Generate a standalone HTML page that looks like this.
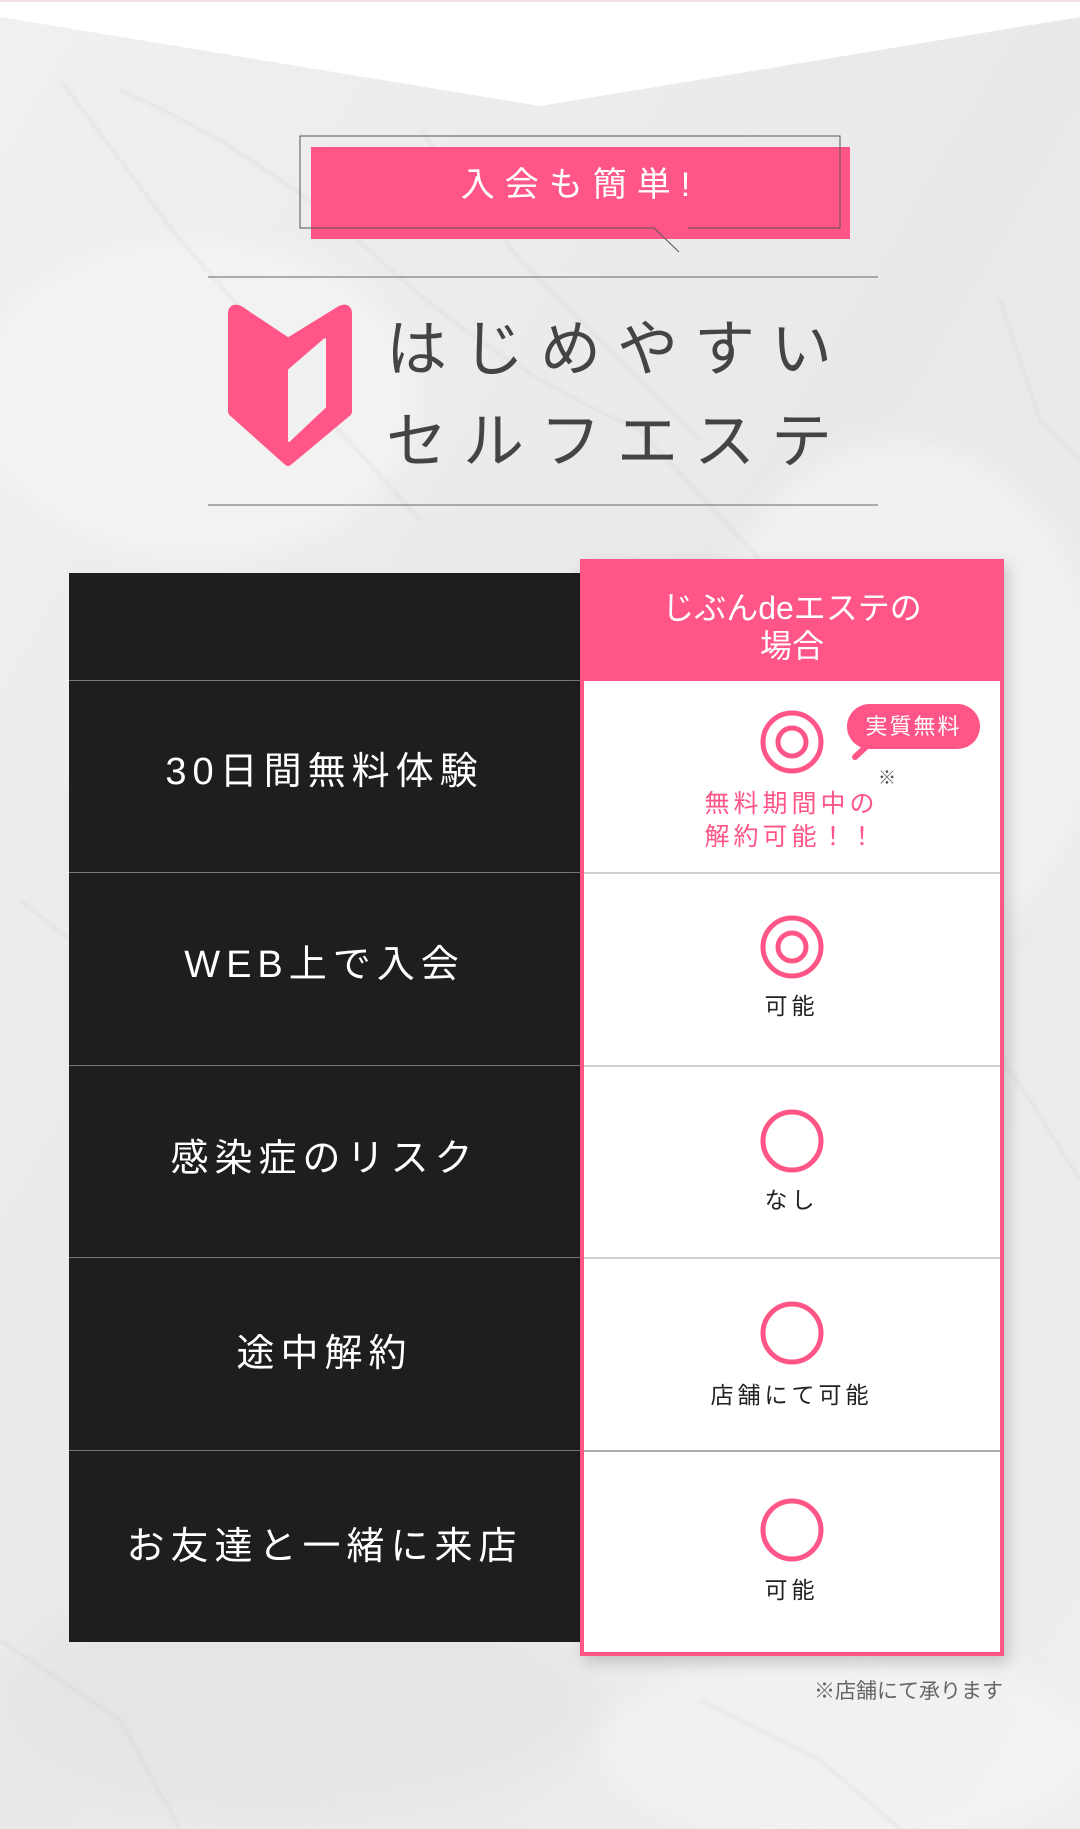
<!DOCTYPE html>
<html><head><meta charset="utf-8">
<style>
*{margin:0;padding:0;box-sizing:border-box}
html,body{width:1080px;height:1829px;overflow:hidden}
body{position:relative;font-family:"Liberation Sans","Noto Sans CJK JP",sans-serif;background:#ededed}
.abs{position:absolute}
.lt{color:#fff;font-size:38px;letter-spacing:6px;text-align:center;width:511px;left:69px;line-height:1}
.rt{color:#222;font-size:23px;letter-spacing:4px;text-align:center;width:423px;left:580px;line-height:1}
</style></head><body>
<svg class="abs" style="left:0;top:0" width="1080" height="1829">
<defs>
<linearGradient id="bg" x1="0" y1="0" x2="1" y2="1">
<stop offset="0" stop-color="#f0f0f0"/><stop offset=".5" stop-color="#e9e9e9"/><stop offset="1" stop-color="#eeeeee"/>
</linearGradient>
<filter id="bl"><feGaussianBlur stdDeviation="1.5"/></filter>
<filter id="bl2"><feGaussianBlur stdDeviation="12"/></filter>
</defs>
<rect width="1080" height="1829" fill="url(#bg)"/>
<g filter="url(#bl2)" opacity=".5">
<ellipse cx="200" cy="400" rx="220" ry="160" fill="#f8f8f8"/>
<ellipse cx="900" cy="700" rx="200" ry="260" fill="#f7f7f7"/>
<ellipse cx="300" cy="1700" rx="300" ry="120" fill="#e3e3e3"/>
<ellipse cx="850" cy="1750" rx="250" ry="100" fill="#f6f6f6"/>
</g>
<g stroke="#bdbdbd" fill="none" stroke-width="1.5" opacity=".4" filter="url(#bl)">
<path d="M60 80 L180 240 L260 330 L330 420 L420 520"/>
<path d="M120 90 Q260 150 380 260 T640 430 L760 560"/>
<path d="M420 130 L520 260 L590 330 L700 440"/>
<path d="M20 900 L120 980 L160 1100 L200 1250"/>
<path d="M960 1000 L1030 1100 L1080 1180"/>
<path d="M0 1640 L120 1720 L180 1829"/>
<path d="M700 1700 L820 1760 L900 1829"/>
<path d="M1000 300 L1040 420 L1080 460"/>
</g>
<polygon points="0,0 1080,0 1080,17 540,106 0,17" fill="#fff"/>
<rect x="0" y="0" width="1080" height="2" fill="#f3dde5"/>
<rect x="311" y="147" width="539" height="92" fill="#ff5587"/>
<path d="M654 228 L300 228 L300 136 L840 136 L840 228 L688 228" stroke="#555" stroke-width="1" fill="none"/>
<path d="M654 228 L679 252" stroke="#555" stroke-width="1"/>
<line x1="208" y1="277" x2="878" y2="277" stroke="#666" stroke-width="1"/>
<line x1="208" y1="505" x2="878" y2="505" stroke="#666" stroke-width="1"/>
<path d="M232 314 Q232 306 240 310 L288 342 L340 310 Q348 306 348 314 L348 412 L288 462 L232 412 Z" fill="#ff5587" stroke="#ff5587" stroke-width="8" stroke-linejoin="round"/>
<path d="M289 370 L325 339 L325 407 L289 441 Z" fill="#f1f1f1" stroke="#f1f1f1" stroke-width="2" stroke-linejoin="round"/>
</svg>
<div class="abs" style="left:311px;top:165px;width:539px;text-align:center;color:#fff;font-size:34px;letter-spacing:10px;line-height:40px">入会も簡単!</div>
<div class="abs" style="left:386px;top:319px;color:#444;font-size:61px;letter-spacing:16px;line-height:1;white-space:nowrap">はじめやすい</div>
<div class="abs" style="left:386px;top:411px;color:#444;font-size:61px;letter-spacing:16px;line-height:1;white-space:nowrap">セルフエステ</div>

<div class="abs" style="left:69px;top:573px;width:511px;height:1069px;background:#1e1e1e"></div>
<div class="abs" style="left:69px;top:680px;width:511px;height:1px;background:#777"></div>
<div class="abs" style="left:69px;top:872px;width:511px;height:1px;background:#777"></div>
<div class="abs" style="left:69px;top:1065px;width:511px;height:1px;background:#777"></div>
<div class="abs" style="left:69px;top:1257px;width:511px;height:1px;background:#777"></div>
<div class="abs" style="left:69px;top:1450px;width:511px;height:1px;background:#777"></div>

<div class="abs" style="left:580px;top:559px;width:424px;height:1097px;background:#fff;border:4px solid #ff5587;box-shadow:4px 6px 14px rgba(0,0,0,.18)"></div>
<div class="abs" style="left:580px;top:559px;width:424px;height:122px;background:#ff5587"></div>
<div class="abs" style="left:580px;top:589px;width:424px;text-align:center;color:#fff;font-size:32px;line-height:38px">じぶんdeエステの<br>場合</div>
<div class="abs" style="left:584px;top:872px;width:416px;height:2px;background:#d0d0d0"></div>
<div class="abs" style="left:584px;top:1065px;width:416px;height:2px;background:#d0d0d0"></div>
<div class="abs" style="left:584px;top:1257px;width:416px;height:2px;background:#d0d0d0"></div>
<div class="abs" style="left:584px;top:1450px;width:416px;height:2px;background:#aaa"></div>

<div class="abs lt" style="top:753px">30日間無料体験</div>
<div class="abs lt" style="top:946px">WEB上で入会</div>
<div class="abs lt" style="top:1140px">感染症のリスク</div>
<div class="abs lt" style="top:1335px">途中解約</div>
<div class="abs lt" style="top:1528px">お友達と一緒に来店</div>

<svg class="abs" style="left:0;top:0" width="1080" height="1829">
<g fill="none" stroke="#ff5587" stroke-width="5">
<circle cx="792" cy="742" r="29"/><circle cx="792" cy="742" r="14"/>
<circle cx="792" cy="947" r="29"/><circle cx="792" cy="947" r="14"/>
<circle cx="792" cy="1141" r="29"/>
<circle cx="792" cy="1333" r="29"/>
<circle cx="792" cy="1530" r="29"/>
</g>
<rect x="847" y="704" width="133" height="45" rx="22.5" fill="#ff5587"/>
<path d="M868 745 L855 757" stroke="#ff5587" stroke-width="6" stroke-linecap="round"/>
</svg>
<div class="abs" style="left:847px;top:715px;width:133px;text-align:center;color:#fff;font-size:22px;letter-spacing:2px;line-height:24px">実質無料</div>
<div class="abs" style="left:878px;top:768px;color:#555;font-size:18px;line-height:20px">※</div>
<div class="abs" style="left:580px;top:788px;width:423px;text-align:center;color:#ff5587;font-size:25px;letter-spacing:4px;line-height:33px">無料期間中の<br>解約可能！！</div>
<div class="abs rt" style="top:995px">可能</div>
<div class="abs rt" style="top:1189px">なし</div>
<div class="abs rt" style="top:1384px">店舗にて可能</div>
<div class="abs rt" style="top:1579px">可能</div>
<div class="abs" style="left:700px;top:1680px;width:303px;text-align:right;color:#666;font-size:21px;line-height:24px">※店舗にて承ります</div>
</body></html>
